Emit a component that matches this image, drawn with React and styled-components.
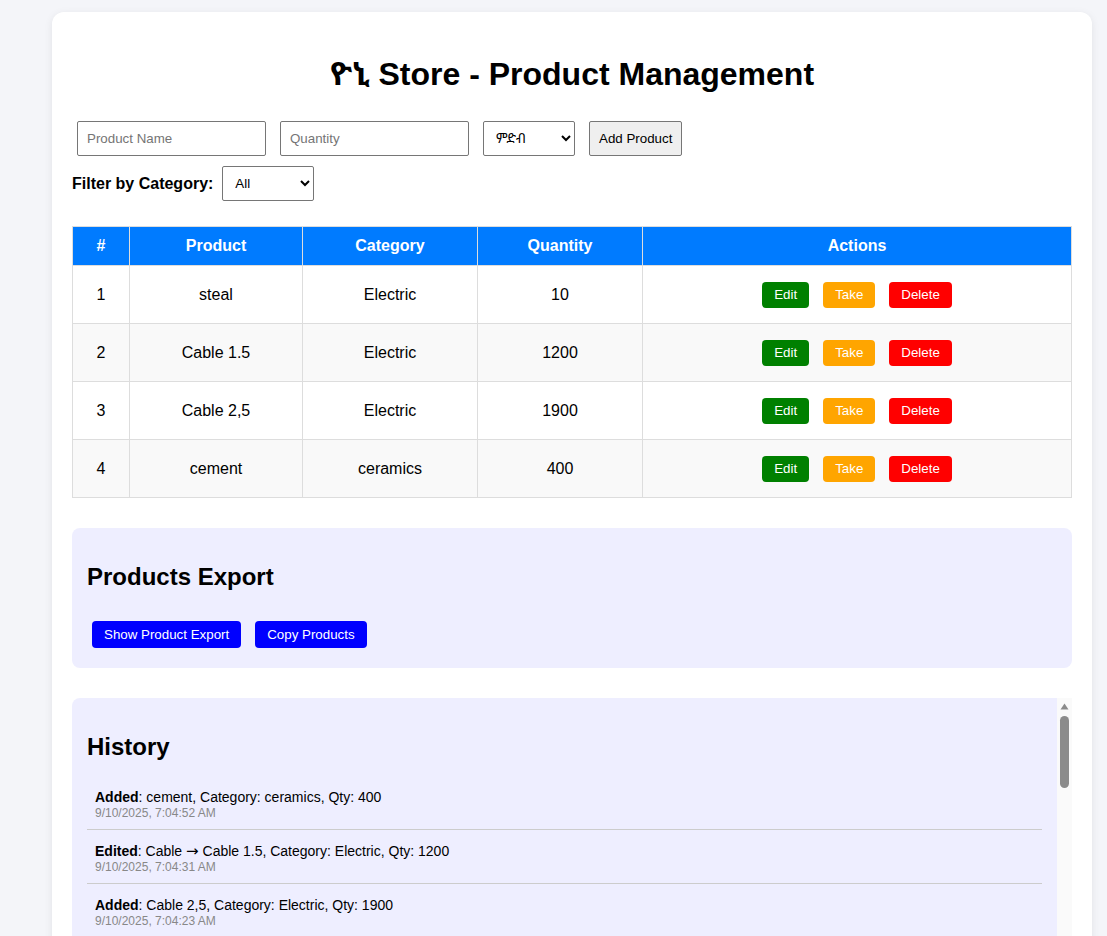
import React from "react";
import styled, { createGlobalStyle } from "styled-components";

const Global = createGlobalStyle`
  html, body { margin: 0; padding: 0; }
  body {
    background: #f4f5f9;
    font-family: "Liberation Sans", Arial, "Noto Sans Ethiopic", "DejaVu Sans", sans-serif;
    color: #000;
  }
`;

const Page = styled.div`
  padding: 12px 15px 40px 52px;
`;

const Card = styled.main`
  background: #fff;
  border-radius: 12px;
  box-shadow: 0 2px 8px rgba(0, 0, 0, 0.08);
  padding: 20px;
`;

const Title = styled.h1`
  font-size: 32px;
  font-weight: bold;
  text-align: center;
  line-height: 37px;
  margin: 24px 0 0;
`;

const Toolbar = styled.div`
  display: flex;
  align-items: center;
  gap: 14px;
  padding: 0 5px;
  margin-top: 28px;
`;

const TextInput = styled.input`
  width: 189px;
  height: 35px;
  box-sizing: border-box;
  border: 1px solid #767676;
  border-radius: 2px;
  padding: 0 9px;
  font-family: inherit;
  font-size: 13.333px;
  &::placeholder { color: #757575; }
`;

const Select = styled.select`
  width: 92px;
  height: 35px;
  box-sizing: border-box;
  border: 1px solid #767676;
  border-radius: 2px;
  padding: 0 8px;
  font-family: inherit;
  font-size: 13.333px;
  background: #fff;
  color: #000;
`;

const PlainButton = styled.button`
  height: 35px;
  box-sizing: border-box;
  padding: 0 9px;
  border: 1px solid #767676;
  border-radius: 2px;
  background: #efefef;
  font-family: inherit;
  font-size: 13.333px;
  color: #000;
`;

const FilterRow = styled.div`
  display: flex;
  align-items: center;
  gap: 9px;
  margin-top: 10px;
`;

const FilterLabel = styled.label`
  font-size: 16px;
  font-weight: bold;
`;

const Table = styled.table`
  width: 100%;
  border-collapse: collapse;
  margin-top: 25px;
  font-size: 16px;
`;

const Th = styled.th`
  background: #007bff;
  color: #fff;
  font-weight: bold;
  border: 1px solid #ddd;
  height: 39px;
  padding: 0 10px;
  box-sizing: border-box;
  width: ${(p) => p.$w};
`;

const Tr = styled.tr`
  background: ${(p) => (p.$alt ? "#f9f9f9" : "#fff")};
`;

const Td = styled.td`
  border: 1px solid #ddd;
  height: 57px;
  padding: 0 10px;
  text-align: center;
`;

const Actions = styled.div`
  display: flex;
  justify-content: center;
  gap: 14px;
`;

const ActionButton = styled.button`
  border: none;
  border-radius: 4px;
  background: ${(p) => p.$bg};
  color: #fff;
  font-family: inherit;
  font-size: 13.333px;
  line-height: 16px;
  padding: 5px 12px;
`;

const Panel = styled.section`
  background: #eeeeff;
  border-radius: 8px;
  padding: 15px;
  margin-top: 30px;
`;

const HistoryBox = styled.section`
  display: flex;
  background: #eeeeff;
  border-radius: 8px 0 0 8px;
  margin-top: 30px;
  height: 300px;
  overflow: hidden;
`;

const HistoryScroll = styled.div`
  flex: 1;
  min-width: 0;
  padding: 15px;
  overflow-y: auto;
  scrollbar-width: none;
  &::-webkit-scrollbar { display: none; }
`;

const ScrollTrack = styled.div`
  width: 15px;
  flex-shrink: 0;
  background: #fafafa;
  display: flex;
  flex-direction: column;
  align-items: center;
`;

const ScrollArrow = styled.svg`
  display: block;
  margin-top: 5px;
`;

const ScrollThumb = styled.div`
  width: 9px;
  height: 72px;
  margin-top: 6px;
  border-radius: 5px;
  background: #8b8b8b;
`;

const PanelTitle = styled.h2`
  font-size: 24px;
  line-height: 28px;
  font-weight: bold;
  margin: 20px 0 ${(p) => p.$mb};
`;

const ExportRow = styled.div`
  display: flex;
  gap: 14px;
  padding: 0 5px 5px;
`;

const BlueButton = styled.button`
  border: none;
  border-radius: 4px;
  background: #0000ff;
  color: #fff;
  font-family: inherit;
  font-size: 13.333px;
  line-height: 17px;
  padding: 5px 12px;
`;

const HistoryList = styled.ul`
  list-style: none;
  margin: 0;
  padding: 0;
`;

const HistoryItem = styled.li`
  padding: 12px 8px 9px;
  border-bottom: 1px solid #ccc;
`;

const HistoryText = styled.div`
  font-size: 14px;
  line-height: 18px;
`;

const Arrow = styled.span`
  font-family: "DejaVu Sans", sans-serif;
  font-size: 15px;
`;

const HistoryDate = styled.div`
  font-size: 12px;
  line-height: 14px;
  color: #888;
`;

const products = [
  { name: "steal", cat: "Electric", qty: 10 },
  { name: "Cable 1.5", cat: "Electric", qty: 1200 },
  { name: "Cable 2,5", cat: "Electric", qty: 1900 },
  { name: "cement", cat: "ceramics", qty: 400 },
];

const history = [
  ["Added", "cement, Category: ceramics, Qty: 400", "9/10/2025, 7:04:52 AM"],
  ["Edited", ["Cable", "Cable 1.5, Category: Electric, Qty: 1200"], "9/10/2025, 7:04:31 AM"],
  ["Added", "Cable 2,5, Category: Electric, Qty: 1900", "9/10/2025, 7:04:23 AM"],
  ["Added", "Cable, Category: Electric, Qty: 1200", "9/10/2025, 7:04:05 AM"],
  ["Taken", "steal, Qty: 5", "9/10/2025, 7:03:48 AM"],
  ["Added", "steal, Category: Electric, Qty: 15", "9/10/2025, 7:03:30 AM"],
  ["Deleted", "pipe, Category: Plumbing", "9/10/2025, 7:02:57 AM"],
  ["Edited", ["pipe", "pipe, Category: Plumbing, Qty: 60"], "9/10/2025, 7:02:41 AM"],
  ["Added", "pipe, Category: Plumbing, Qty: 50", "9/10/2025, 7:02:20 AM"],
  ["Taken", "paint, Qty: 4", "9/10/2025, 7:01:58 AM"],
  ["Deleted", "paint, Category: ceramics", "9/10/2025, 7:01:35 AM"],
  ["Added", "paint, Category: ceramics, Qty: 20", "9/10/2025, 7:01:12 AM"],
  ["Taken", "cement, Qty: 10", "9/10/2025, 7:00:49 AM"],
  ["Deleted", "cement, Category: ceramics", "9/10/2025, 7:00:31 AM"],
  ["Added", "cement, Category: ceramics, Qty: 100", "9/10/2025, 7:00:10 AM"],
  ["Edited", ["wire", "Cable, Category: Electric, Qty: 30"], "9/10/2025, 6:59:44 AM"],
  ["Added", "wire, Category: Electric, Qty: 30", "9/10/2025, 6:59:20 AM"],
  ["Added", "switch, Category: Electric, Qty: 25", "9/10/2025, 6:58:57 AM"],
  ["Deleted", "switch, Category: Electric", "9/10/2025, 6:58:30 AM"],
];

export default function App() {
  return (
    <Page>
      <Global />
      <Card>
        <Title>ዮኒ Store - Product Management</Title>
        <Toolbar>
          <TextInput placeholder="Product Name" />
          <TextInput placeholder="Quantity" />
          <Select defaultValue="">
            <option value="">ምድብ</option>
            <option>Electric</option>
            <option>ceramics</option>
          </Select>
          <PlainButton>Add Product</PlainButton>
        </Toolbar>
        <FilterRow>
          <FilterLabel>Filter by Category:</FilterLabel>
          <Select defaultValue="All">
            <option>All</option>
            <option>Electric</option>
            <option>ceramics</option>
          </Select>
        </FilterRow>
        <Table>
          <thead>
            <tr>
              <Th $w="57px">#</Th>
              <Th $w="173px">Product</Th>
              <Th $w="175px">Category</Th>
              <Th $w="165px">Quantity</Th>
              <Th>Actions</Th>
            </tr>
          </thead>
          <tbody>
            {products.map((p, i) => (
              <Tr key={i} $alt={i % 2 === 1}>
                <Td>{i + 1}</Td>
                <Td>{p.name}</Td>
                <Td>{p.cat}</Td>
                <Td>{p.qty}</Td>
                <Td>
                  <Actions>
                    <ActionButton $bg="#008000">Edit</ActionButton>
                    <ActionButton $bg="#ffa500">Take</ActionButton>
                    <ActionButton $bg="#ff0000">Delete</ActionButton>
                  </Actions>
                </Td>
              </Tr>
            ))}
          </tbody>
        </Table>
        <Panel>
          <PanelTitle $mb="30px">Products Export</PanelTitle>
          <ExportRow>
            <BlueButton>Show Product Export</BlueButton>
            <BlueButton>Copy Products</BlueButton>
          </ExportRow>
        </Panel>
        <HistoryBox>
          <HistoryScroll>
            <PanelTitle $mb="15px">History</PanelTitle>
            <HistoryList>
              {history.map(([k, t, d], i) => (
                <HistoryItem key={i}>
                  <HistoryText>
                    <strong>{k}</strong>:{" "}
                    {Array.isArray(t) ? (
                      <>
                        {t[0]} <Arrow>→</Arrow> {t[1]}
                      </>
                    ) : (
                      t
                    )}
                  </HistoryText>
                  <HistoryDate>{d}</HistoryDate>
                </HistoryItem>
              ))}
            </HistoryList>
          </HistoryScroll>
          <ScrollTrack aria-hidden="true">
            <ScrollArrow width="9" height="7" viewBox="0 0 9 7">
              <path d="M4.5 0.5 L8.5 6.5 L0.5 6.5 Z" fill="#8b8b8b" />
            </ScrollArrow>
            <ScrollThumb />
          </ScrollTrack>
        </HistoryBox>
      </Card>
    </Page>
  );
}
